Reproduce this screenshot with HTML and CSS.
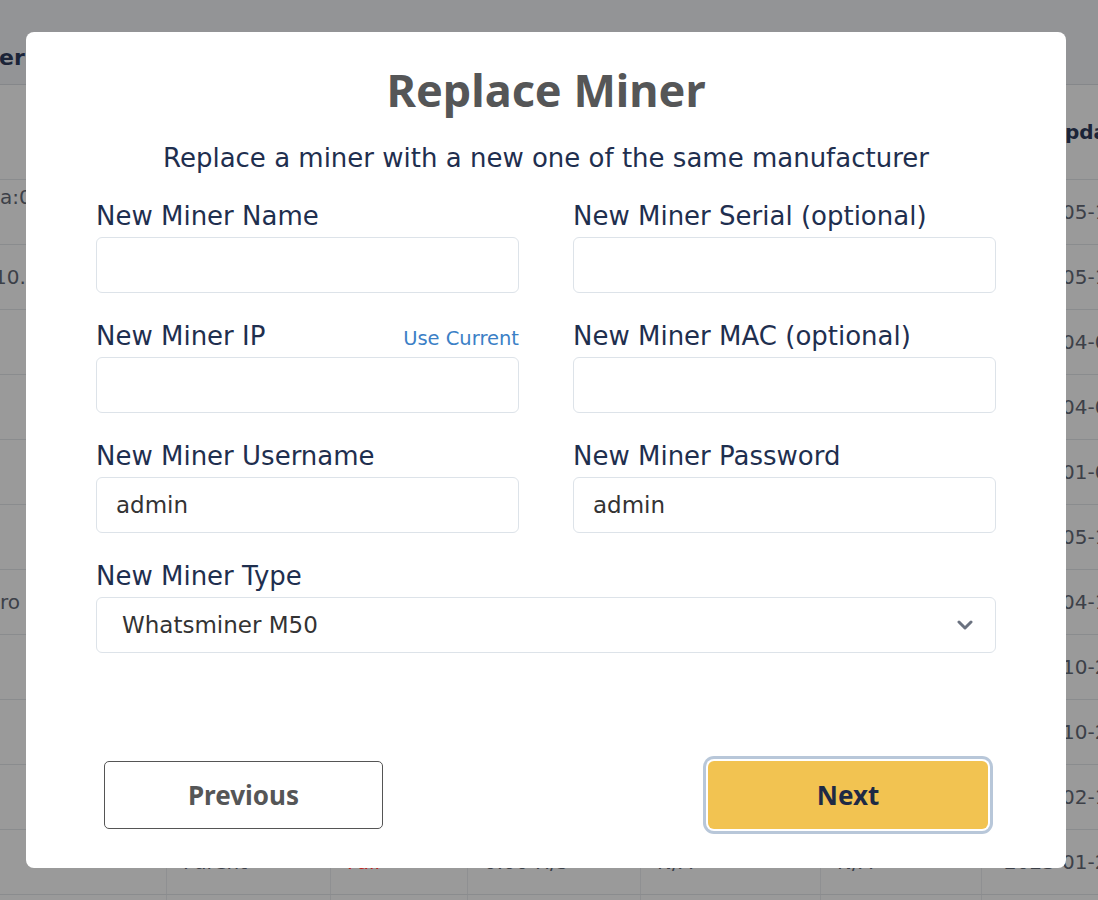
FILE: index.html
```html
<!DOCTYPE html>
<html lang="en">

<head>
    <meta charset="UTF-8">
    <title>Replace Miner</title>
    <link rel="stylesheet" href="styles.css">
</head>

<body>
    <div class="page">
        <div class="topbar"><span class="crumb">Miner</span></div>
        <div class="table">
            <div class="row head">
                <span class="c1"></span><span class="c2"></span><span class="c3"></span><span class="c4"></span>
                <span class="c5"></span><span class="c6"></span><span class="c7">Last Updated</span>
            </div>
            <div class="row"><span class="c1 top"><i>a:0</i></span><span class="c2"></span><span class="c3"></span><span class="c4"></span><span class="c5"></span><span class="c6"></span><span class="c7">2023-05-16</span></div>
            <div class="row"><span class="c1"><i class="shift">10.</i></span><span class="c2"></span><span class="c3"></span><span class="c4"></span><span class="c5"></span><span class="c6"></span><span class="c7">2023-05-12</span></div>
            <div class="row"><span class="c1"></span><span class="c2"></span><span class="c3"></span><span class="c4"></span><span class="c5"></span><span class="c6"></span><span class="c7">2023-04-02</span></div>
            <div class="row"><span class="c1"></span><span class="c2"></span><span class="c3"></span><span class="c4"></span><span class="c5"></span><span class="c6"></span><span class="c7">2023-04-02</span></div>
            <div class="row"><span class="c1"></span><span class="c2"></span><span class="c3"></span><span class="c4"></span><span class="c5"></span><span class="c6"></span><span class="c7">2023-01-03</span></div>
            <div class="row"><span class="c1"></span><span class="c2"></span><span class="c3"></span><span class="c4"></span><span class="c5"></span><span class="c6"></span><span class="c7">2023-05-12</span></div>
            <div class="row"><span class="c1"><i>ro</i></span><span class="c2"></span><span class="c3"></span><span class="c4"></span><span class="c5"></span><span class="c6"></span><span class="c7">2023-04-12</span></div>
            <div class="row"><span class="c1"></span><span class="c2"></span><span class="c3"></span><span class="c4"></span><span class="c5"></span><span class="c6"></span><span class="c7">2022-10-20</span></div>
            <div class="row"><span class="c1"></span><span class="c2"></span><span class="c3"></span><span class="c4"></span><span class="c5"></span><span class="c6"></span><span class="c7">2022-10-20</span></div>
            <div class="row"><span class="c1"></span><span class="c2"></span><span class="c3"></span><span class="c4"></span><span class="c5"></span><span class="c6"></span><span class="c7">2023-02-10</span></div>
            <div class="row"><span class="c1"></span><span class="c2">Parent</span><span class="c3 fail">Fail</span><span class="c4">0.00 H/s</span><span class="c5">N/A</span><span class="c6">N/A</span><span class="c7">2023-01-24</span></div>
            <div class="row"><span class="c1"></span><span class="c2"></span><span class="c3"></span><span class="c4"></span><span class="c5"></span><span class="c6"></span><span class="c7"></span></div>
        </div>
    </div>

    <div class="modal">
        <h1 class="title">Replace Miner</h1>
        <p class="subtitle">Replace a miner with a new one of the same manufacturer</p>
        <form class="fields">
            <div class="field">
                <div class="label-row"><label>New Miner Name</label></div>
                <input class="input" type="text">
            </div>
            <div class="field">
                <div class="label-row"><label>New Miner Serial (optional)</label></div>
                <input class="input" type="text">
            </div>
            <div class="field">
                <div class="label-row"><label>New Miner IP</label><a class="use-current" href="javascript:;">Use Current</a></div>
                <input class="input" type="text">
            </div>
            <div class="field">
                <div class="label-row"><label>New Miner MAC (optional)</label></div>
                <input class="input" type="text">
            </div>
            <div class="field">
                <div class="label-row"><label>New Miner Username</label></div>
                <input class="input" type="text" value="admin">
            </div>
            <div class="field">
                <div class="label-row"><label>New Miner Password</label></div>
                <input class="input" type="text" value="admin">
            </div>
            <div class="field wide">
                <div class="label-row"><label>New Miner Type</label></div>
                <div class="select">
                    <span>Whatsminer M50</span>
                    <svg width="16" height="10" viewBox="0 0 16 10"><path d="M2 2l6 6 6-6" fill="none" stroke="#6b7280" stroke-width="3" stroke-linecap="round" stroke-linejoin="round"/></svg>
                </div>
            </div>
        </form>
        <div class="actions">
            <button class="btn prev" type="button">Previous</button>
            <button class="btn next" type="button">Next</button>
        </div>
    </div>
</body>

</html>
```

FILE: styles.css
```css
body {
    margin: 0;
    font-family: "DejaVu Sans", "Noto Sans", sans-serif;
    background: #9a9a9a;
    overflow: hidden;
}

.page {
    width: 1098px;
    height: 900px;
    overflow: hidden;
}

.topbar {
    height: 85px;
    background: #939496;
    border-bottom: 1px solid #85878a;
    box-sizing: border-box;
    padding: 45px 0 0 0;
}

.crumb {
    display: inline-block;
    margin-left: -46px;
    font-size: 22px;
    font-weight: 700;
    color: #1b2438;
}

.table {
    font-size: 20px;
    color: #3c4048;
}

.row {
    display: grid;
    grid-template-columns: 166px 164px 137px 173px 180px 161px 117px;
    height: 65px;
    border-bottom: 1px solid #8a8c8e;
    box-sizing: border-box;
}

.row.head {
    height: 95px;
    font-weight: 700;
    color: #1b2438;
}

.row span {
    display: flex;
    align-items: center;
    padding-left: 16px;
    border-left: 1px solid #8f9092;
    white-space: nowrap;
    overflow: hidden;
}

.row span.c1 {
    border-left: none;
    padding: 0;
}

.row span.c1 i {
    font-style: normal;
}

.row span.c1 i.shift {
    margin-left: -6px;
}

.row span.c1.top {
    align-items: flex-start;
    padding-top: 5px;
}

.row span.c7 {
    padding-left: 22px;
}

.row.head span {
    border-left-color: transparent;
}

.row.head span.c7 {
    padding-left: 12px;
    font-size: 20px;
}

.fail {
    color: #c0221c;
}

.modal {
    position: absolute;
    left: 26px;
    top: 32px;
    width: 1040px;
    height: 836px;
    box-sizing: border-box;
    background: #fff;
    border-radius: 8px;
    padding: 30px 70px 0;
    display: flex;
    flex-direction: column;
}

.title {
    margin: 0;
    text-align: center;
    font-family: "Noto Sans", sans-serif;
    font-size: 45px;
    line-height: 56px;
    font-weight: 700;
    color: #555657;
}

.subtitle {
    margin: 24px 0 0;
    text-align: center;
    font-size: 26px;
    line-height: 32px;
    color: #1f2f4f;
}

.fields {
    margin-top: 26px;
    display: grid;
    grid-template-columns: 1fr 1fr;
    column-gap: 54px;
    row-gap: 27px;
}

.field.wide {
    grid-column: 1 / 3;
}

.label-row {
    display: flex;
    justify-content: space-between;
    align-items: center;
    height: 32px;
    margin-bottom: 5px;
}

.label-row label {
    font-size: 26px;
    color: #1f2f4f;
}

.use-current {
    font-size: 19.5px;
    color: #3b80c6;
    text-decoration: none;
    padding-top: 4px;
}

.input,
.select {
    display: block;
    width: 100%;
    height: 56px;
    box-sizing: border-box;
    border: 1px solid #dde3e9;
    border-radius: 6px;
    padding: 0 19px;
    font-family: inherit;
    font-size: 23px;
    color: #333;
    outline: none;
}

.select {
    display: flex;
    align-items: center;
    justify-content: space-between;
    padding: 0 22px 0 25px;
}

.actions {
    margin-top: 108px;
    display: flex;
    justify-content: space-between;
    padding: 0 8px;
}

.btn {
    width: 280px;
    height: 68px;
    font-family: "Noto Sans", sans-serif;
    font-size: 26px;
    font-weight: 700;
    border-radius: 5px;
    cursor: pointer;
}

.prev {
    background: #fff;
    border: 1px solid #555;
    color: #555657;
    width: 279px;
}

.next {
    background: #f2c351;
    border: none;
    color: #1e2a45;
    box-shadow: 0 0 0 2px #fff, 0 0 0 5px #b8c7d9;
    border-radius: 6px;
}
```
